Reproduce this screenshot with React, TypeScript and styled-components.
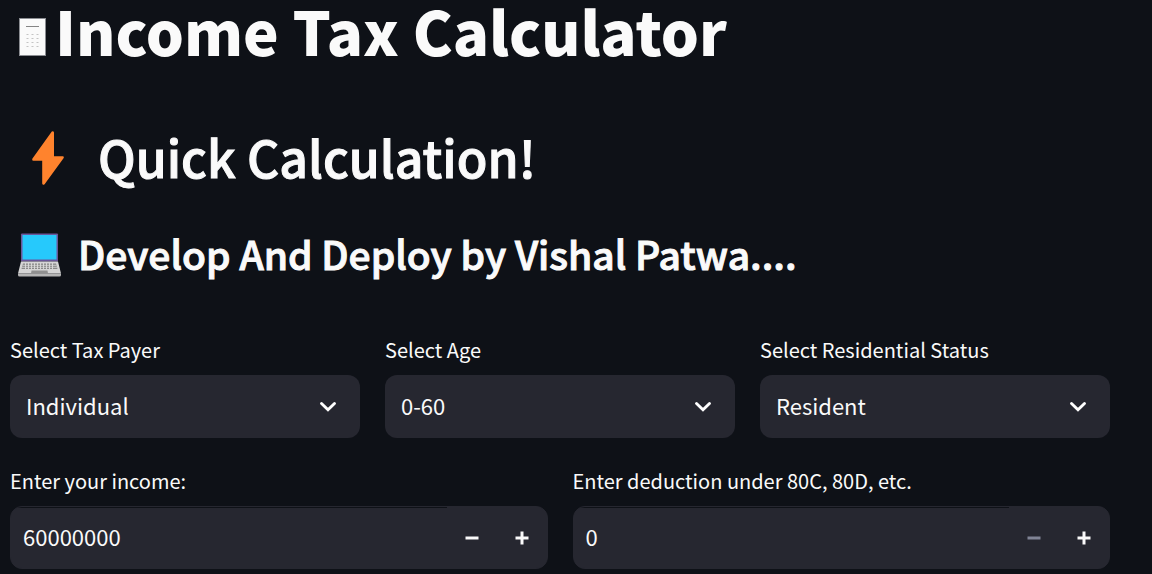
import React, { useId, useState } from "react";
import styled, { createGlobalStyle } from "styled-components";

const GlobalStyle = createGlobalStyle`
  * { box-sizing: border-box; }
  body {
    margin: 0;
    background: #0e1117;
    color: #fafafa;
    font-family: "Noto Sans CJK JP", "Noto Sans", sans-serif;
  }
`;

const Page = styled.main`
  padding: 0 42px 4px 10px;
`;

const Title = styled.h1`
  display: flex;
  align-items: baseline;
  gap: 9px;
  margin: 0;
  padding-left: 9px;
  font-size: 60px;
  font-weight: 900;
  line-height: 60px;
`;

const Subtitle = styled.h2`
  display: flex;
  align-items: center;
  gap: 33px;
  margin: 62px 0 0;
  padding-left: 21px;
  font-size: 50px;
  font-weight: 500;
  line-height: 68px;
  -webkit-text-stroke: 1px currentColor;

  > svg { margin-top: 4px; }
`;

const Credit = styled.h3`
  display: flex;
  align-items: center;
  gap: 17px;
  margin: 32px 0 0;
  padding-left: 8px;
  font-size: 39px;
  font-weight: 500;
  line-height: 62px;
  -webkit-text-stroke: 1px currentColor;

  > svg { margin-top: 4px; }
`;

const Form = styled.form`
  display: flex;
  flex-direction: column;
  gap: 31px;
  margin-top: 54px;
`;

const Row = styled.div<{ $columns: number }>`
  display: grid;
  grid-template-columns: repeat(${(p) => p.$columns}, minmax(0, 1fr));
  gap: 25px;
`;

const Field = styled.div`
  display: flex;
  flex-direction: column;
  gap: 13px;
`;

const Label = styled.label`
  font-size: 20px;
  line-height: 24px;
`;

const SelectBox = styled.div`
  display: grid;
  align-items: center;
  border-radius: 12px;
  background: #262730;

  > * { grid-area: 1 / 1; }
  > svg {
    justify-self: end;
    margin-right: 23px;
    pointer-events: none;
  }
`;

const Select = styled.select`
  appearance: none;
  width: 100%;
  height: 63px;
  padding: 0 56px 4px 16px;
  border: 0;
  border-radius: 12px;
  background: transparent;
  color: inherit;
  font: inherit;
  font-size: 22px;
`;

const NumberBox = styled.div`
  display: flex;
  height: 63px;
  border: 1px solid #262730;
  border-radius: 12px;
  background: #262730;
  overflow: hidden;
`;

const NumberInput = styled.input`
  flex: 1;
  min-width: 0;
  padding: 0 12px 4px;
  border: 0;
  border-top: 1px solid #0e1117;
  border-radius: 0;
  background: transparent;
  color: inherit;
  font: inherit;
  font-size: 22px;
  outline: none;
`;

const StepButton = styled.button`
  display: flex;
  align-items: center;
  justify-content: center;
  width: 50px;
  padding: 0;
  border: 0;
  background: transparent;
  color: #fafafa;

  &:disabled { color: #808495; }
`;

const CalculatorIcon = () => (
  <svg width="27" height="38" viewBox="0 0 27 38" aria-hidden="true">
    <rect x="0.5" y="0.5" width="26" height="37" fill="#fafafa" stroke="#8b8d92" />
    <path d="M7 8.5h13" stroke="#858585" />
    {[16.5, 20.5, 24.5, 28.5].map((y) => (
      <path key={y} d={`M7.500 ${y}h2M12.500 ${y}h2M17.500 ${y}h2`} stroke="#c4c4c4" />
    ))}
  </svg>
);

const BoltIcon = () => (
  <svg width="34" height="56" viewBox="0 0 34 56" aria-hidden="true">
    <path
      d="M20.800 1.500 1.300 28.800Q.6 30.600 2.300 30.800H11.200V53.500Q11.700 55.600 13.600 54.200L32.700 28Q33.500 26.400 31.800 26.200H23V2.500Q22.500.5 20.800 1.500Z"
      fill="#ff832d"
    />
  </svg>
);

const LaptopIcon = () => (
  <svg width="43" height="44" viewBox="0 0 43 44" aria-hidden="true">
    <rect x="3" y="0.5" width="37" height="28" rx="1" fill="#6a579b" />
    <rect x="4.500" y="2" width="34" height="24.500" fill="#26c9fc" />
    <path d="M3 28.500h37l3 12H0Z" fill="#d5d5d5" />
    <path d="M0 40.500h43V42q0 1.500-1.500 1.500h-40Q0 43.500 0 42Z" fill="#b5b5b5" />
    <path d="M5 30.500h33l1.500 5.500h-36Z" fill="#888" />
    <path d="M4.500 32.300h34M4 34.300h35" stroke="#e5e5e5" strokeWidth="0.700" />
    <path d="M7.500 30v6M10.500 30v6M13.500 30v6M16.500 30v6M19.500 30v6M22.500 30v6M25.500 30v6M28.500 30v6M31.500 30v6M34.500 30v6" stroke="#dcdcdc" strokeWidth="0.900" />
    <path d="M13.500 37.500h16l.5 3H13Z" fill="#909090" />
  </svg>
);

const ChevronIcon = () => (
  <svg width="18" height="12" viewBox="0 0 18 12" aria-hidden="true">
    <path d="M2.500 2.500 9 8.800l6.500-6.300" fill="none" stroke="#fff" strokeWidth="2.900" strokeLinecap="round" />
  </svg>
);

const StepIcon = ({ plus }: { plus?: boolean }) => (
  <svg width="14" height="14" viewBox="0 0 14 14" aria-hidden="true">
    <path d={plus ? "M.5 7h13M7 .5v13" : "M.5 7h13"} stroke="currentColor" strokeWidth="3" />
  </svg>
);

function SelectField({ label, options }: { label: string; options: string[] }) {
  const id = useId();
  return (
    <Field>
      <Label htmlFor={id}>{label}</Label>
      <SelectBox>
        <Select id={id}>
          {options.map((o) => (
            <option key={o}>{o}</option>
          ))}
        </Select>
        <ChevronIcon />
      </SelectBox>
    </Field>
  );
}

function NumberField({ label, initial }: { label: string; initial: number }) {
  const id = useId();
  const [value, setValue] = useState(initial);
  return (
    <Field>
      <Label htmlFor={id}>{label}</Label>
      <NumberBox>
        <NumberInput
          id={id}
          inputMode="numeric"
          value={value}
          onChange={(e) => setValue(Number(e.target.value.replace(/\D/g, "")))}
        />
        <StepButton type="button" aria-label="Decrease" disabled={value <= 0} onClick={() => setValue(value - 1)}>
          <StepIcon />
        </StepButton>
        <StepButton type="button" aria-label="Increase" onClick={() => setValue(value + 1)}>
          <StepIcon plus />
        </StepButton>
      </NumberBox>
    </Field>
  );
}

export default function App() {
  return (
    <Page>
      <GlobalStyle />
      <Title>
        <CalculatorIcon />
        Income Tax Calculator
      </Title>
      <Subtitle>
        <BoltIcon />
        Quick Calculation!
      </Subtitle>
      <Credit>
        <LaptopIcon />
        Develop And Deploy by Vishal Patwa....
      </Credit>
      <Form>
        <Row $columns={3}>
          <SelectField label="Select Tax Payer" options={["Individual"]} />
          <SelectField label="Select Age" options={["0-60"]} />
          <SelectField label="Select Residential Status" options={["Resident"]} />
        </Row>
        <Row $columns={2}>
          <NumberField label="Enter your income:" initial={60000000} />
          <NumberField label="Enter deduction under 80C, 80D, etc." initial={0} />
        </Row>
      </Form>
    </Page>
  );
}
